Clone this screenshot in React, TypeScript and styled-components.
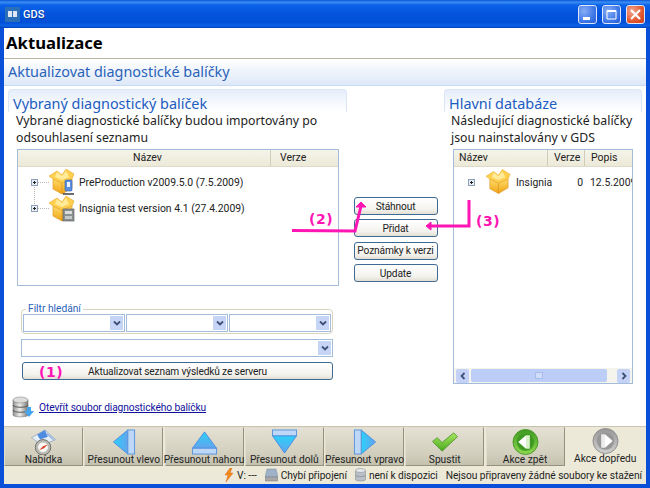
import React from "react"
import styled, { createGlobalStyle } from "styled-components"

const UI_FONT = `"Noto Sans", "DejaVu Sans", sans-serif`
const SMALL_FONT = `Roboto, "Noto Sans", sans-serif`
const PINK = "#ff14b4"

const Global = createGlobalStyle`
  html, body { margin: 0; padding: 0; background: #0054e3; }
  * { box-sizing: border-box; }
  body { font-family: ${UI_FONT}; font-size: 11px; color: #222; overflow: hidden; }
`

const Win = styled.div`
  position: relative;
  width: 650px;
  height: 488px;
  display: flex;
  flex-direction: column;
  background: #0a4fd8;
  padding: 0 4px 4px;
  overflow: hidden;
`

const TitleBar = styled.div`
  height: 28px;
  margin: 0 -4px;
  padding: 0 5px;
  display: flex;
  align-items: center;
  gap: 3px;
  background: linear-gradient(180deg, #0a57d8 0%, #3a8df2 8%, #0a62e8 18%, #0453dd 50%, #0250d8 80%, #0a62e6 92%, #0040b8 100%);
  color: #fff;
  font-family: ${SMALL_FONT};
  font-size: 11px;
  font-weight: 500;
`

const TitleText = styled.span`
  flex: 1;
  text-shadow: 1px 1px 0 #0b3a9a;
`

const WinButton = styled.div<{ $close?: boolean }>`
  width: 19px;
  height: 19px;
  border: 1px solid #dfe8fb;
  border-radius: 3px;
  margin-left: 2px;
  display: flex;
  align-items: center;
  justify-content: center;
  background: ${(p) =>
    p.$close
      ? "radial-gradient(circle at 30% 30%, #f2a88e, #e2572e 60%, #c83f18)"
      : "radial-gradient(circle at 30% 30%, #86adf5, #3a74e6 65%, #2a5ed6)"};
`

const Client = styled.div`
  position: relative;
  flex: 1;
  display: flex;
  flex-direction: column;
  background: #fff;
  min-height: 0;
`

const PageTitle = styled.h1`
  margin: 0;
  height: 31px;
  padding: 0 0 0 2px;
  font-size: 16.7px;
  line-height: 30px;
  font-weight: 700;
  color: #000;
  border-bottom: 1px solid #b9b6a8;
`

const SubTitle = styled.h2`
  margin: 0;
  height: 27px;
  padding: 0 0 2px 4px;
  display: flex;
  align-items: center;
  font-size: 14.4px;
  font-weight: 400;
  color: #2a62b8;
  background: linear-gradient(180deg, #fff 0%, #dde8f8 100%);
  border-bottom: 1px solid #c8d9f2;
`

const Body = styled.div`
  flex: 1;
  min-height: 0;
  display: grid;
  grid-template-columns: 339px 84px 198px;
  column-gap: 6.5px;
  padding: 3px 0 0 4px;
`

const Column = styled.section`
  display: flex;
  flex-direction: column;
  min-width: 0;
`

const PanelHead = styled.h3`
  margin: 0;
  height: 23px;
  padding: 4px 0 0 4px;
  font-size: 14.4px;
  line-height: 20px;
  font-weight: 400;
  color: #1d5cc0;
  border: 1px solid #dbe6f6;
  border-bottom: 0;
  border-radius: 4px 4px 0 0;
  background: linear-gradient(180deg, #e6eefb 0%, #fff 100%);
`

const PanelText = styled.p<{ $indent: number }>`
  margin: 0 0 3px;
  padding-left: ${(p) => p.$indent}px;
  font-size: 12.25px;
  line-height: 17px;
  color: #222;
`

const ListBox = styled.div<{ $h: number; $ml: number; $w: number }>`
  height: ${(p) => p.$h}px;
  width: ${(p) => p.$w}px;
  margin-left: ${(p) => p.$ml}px;
  border: 1px solid #a4bcdc;
  display: flex;
  flex-direction: column;
  background: #fff;
  overflow: hidden;
`

const ListHeader = styled.div<{ $cols: string }>`
  height: 17px;
  flex: none;
  display: grid;
  grid-template-columns: ${(p) => p.$cols};
  background: linear-gradient(180deg, #f5f4ea, #ece9d8);
  border-bottom: 1px solid #dedbc8;
  font-family: ${SMALL_FONT};
  font-size: 10.5px;
  line-height: 16px;
  color: #222;
`

const HeaderCell = styled.div<{ $pad: number }>`
  padding-left: ${(p) => p.$pad}px;
  border-right: 1px solid #cfccb8;
  white-space: nowrap;
  overflow: hidden;
  &:last-child { border-right: 0; }
`

const Rows = styled.div`
  flex: 1;
  min-height: 0;
  padding-top: 2px;
`

const TreeRow = styled.div<{ $pad: number }>`
  height: 26.5px;
  display: flex;
  align-items: center;
  padding-left: ${(p) => p.$pad}px;
  font-family: ${SMALL_FONT};
  font-size: 10.4px;
  white-space: nowrap;
  color: #222;
`

const Expander = styled.span`
  width: 7px;
  height: 7px;
  flex: none;
  border: 1px solid #8f9fb5;
  background: #e8eef8;
  position: relative;
  &::before {
    content: "";
    position: absolute;
    left: 1px; right: 1px; top: 2px;
    height: 1px;
    background: #222;
  }
  &::after {
    content: "";
    position: absolute;
    top: 1px; bottom: 1px; left: 2px;
    width: 1px;
    background: #222;
  }
`

const Stem = styled.span`
  position: absolute;
  left: 2px;
  top: 7px;
  height: 19px;
  border-left: 1px dotted #b8b8b8;
`

const Dash = styled.span`
  width: 11px;
  flex: none;
  border-top: 1px dotted #b8b8b8;
`

const Cell = styled.span<{ $w: number; $right?: boolean; $pad?: number }>`
  width: ${(p) => p.$w}px;
  flex: none;
  padding-left: ${(p) => p.$pad ?? 0}px;
  text-align: ${(p) => (p.$right ? "right" : "left")};
  overflow: hidden;
`

const HScroll = styled.div`
  height: 15px;
  flex: none;
  padding: 0 2px;
  display: flex;
  align-items: center;
  gap: 2px;
  background: #f4f3ec;
`

const ScrollButton = styled.div`
  width: 13px;
  height: 14px;
  border-radius: 2px;
  background: #c3d2f6;
  display: flex;
  align-items: center;
  justify-content: center;
`

const ScrollThumb = styled.div`
  flex: 1;
  height: 13px;
  margin-right: 8px;
  border-radius: 2px;
  background: #bccdf8;
  display: flex;
  align-items: center;
  justify-content: center;
  &::after {
    content: "";
    width: 6px;
    height: 5px;
    border: 1px solid #a9bdeb;
    background: #cfdcfa;
  }
`

const FilterGroup = styled.fieldset`
  margin: 18px 0 0 13px;
  width: 312px;
  height: 30px;
  padding: 0 1px;
  border: 1px solid #d8d4c0;
  border-radius: 4px;
  display: flex;
  gap: 1px;
`

const FilterLegend = styled.legend`
  margin-left: 3px;
  padding: 0 2px;
  font-family: ${SMALL_FONT};
  font-size: 10.2px;
  line-height: 10px;
  color: #2a62b8;
`

const ComboBox = styled.div<{ $wide?: boolean }>`
  height: 18px;
  border: 1px solid #a4bcdc;
  background: #fff;
  display: flex;
  justify-content: flex-end;
  align-items: center;
  padding-right: 1px;
  width: ${(p) => (p.$wide ? "312px" : "auto")};
  margin: ${(p) => (p.$wide ? "5px 0 0 13px" : "0")};
  flex: ${(p) => (p.$wide ? "none" : 1)};
`

const ComboArrow = styled.span`
  width: 13px;
  height: 14px;
  background: #c6d5f5;
  display: flex;
  align-items: center;
  justify-content: center;
`

const ActionButton = styled.button<{ $wide?: boolean }>`
  display: block;
  flex: none;
  height: 18px;
  width: ${(p) => (p.$wide ? "311px" : "84px")};
  margin: ${(p) => (p.$wide ? "5px 0 0 14px" : "0")};
  padding: 0;
  border: 1px solid #3f6a94;
  border-radius: 3px;
  background: linear-gradient(180deg, #fff 0%, #f4f3ee 70%, #e2dfd4 100%);
  font-family: ${SMALL_FONT};
  font-size: 10.2px;
  letter-spacing: -0.15px;
  line-height: 15px;
  color: #222;
  white-space: nowrap;
`

const ButtonStack = styled.div`
  display: flex;
  flex-direction: column;
  gap: 4.4px;
  padding-top: 108px;
`

const LinkRow = styled.div`
  display: flex;
  align-items: center;
  gap: 4px;
  margin: 15px 0 0 3px;
  font-family: ${SMALL_FONT};
  font-size: 10.2px;
  letter-spacing: -0.1px;
`

const LinkText = styled.a`
  color: #10109c;
  text-decoration: underline;
`

const Toolbar = styled.div`
  height: 40px;
  flex: none;
  display: flex;
  gap: 1.25px;
  background: #ece9d8;
  border-top: 1px solid #c9c5b2;
`

const ToolButton = styled.div<{ $flat?: boolean }>`
  position: relative;
  width: 79px;
  flex: none;
  display: flex;
  flex-direction: column;
  align-items: center;
  padding-top: 1px;
  font-family: ${SMALL_FONT};
  font-size: 10.2px;
  line-height: 12px;
  white-space: nowrap;
  color: #222;
  border: ${(p) => (p.$flat ? "0" : "1px solid #94917f")};
  border-top-color: #e0ddcf;
  border-left-color: #e0ddcf;
  background: ${(p) =>
    p.$flat ? "#ece9d8" : "linear-gradient(180deg, #e4e1d4 0%, #d2cfbe 70%, #c4c1af 100%)"};
  & > svg { flex: none; height: 26px; margin-bottom: -1px; }
`

const StatusBar = styled.div`
  height: 18px;
  flex: none;
  display: flex;
  justify-content: flex-end;
  align-items: center;
  gap: 8px;
  padding-right: 4px;
  background: #ece9d8;
  font-family: ${SMALL_FONT};
  font-size: 10.2px;
  letter-spacing: -0.05px;
  white-space: nowrap;
  color: #222;
`

const StatusItem = styled.span`
  display: inline-flex;
  align-items: center;
  gap: 3px;
`

const Overlay = styled.svg`
  position: absolute;
  left: 0;
  top: 0;
  pointer-events: none;
`

const Mark = styled.span<{ $x: number; $y: number }>`
  position: absolute;
  left: ${(p) => p.$x}px;
  top: ${(p) => p.$y}px;
  font-family: "DejaVu Sans", sans-serif;
  font-size: 14px;
  line-height: 16px;
  font-weight: 700;
  letter-spacing: 0.5px;
  color: ${PINK};
`

const Chevron = ({ dir = "down" }: { dir?: "down" | "left" | "right" }) => {
  const d =
    dir === "down" ? "M1 2.5 4 5.5 7 2.5" : dir === "left" ? "M5.5 1 2.5 4 5.5 7" : "M2.5 1 5.5 4 2.5 7"
  return (
    <svg width="8" height="8" viewBox="0 0 8 8">
      <path d={d} fill="none" stroke="#3d5078" strokeWidth="1.8" />
    </svg>
  )
}

const BoxIcon = ({ id, badge }: { id: string; badge?: "phone" | "box" }) => (
  <svg width="26" height="26" viewBox="0 0 26 26">
    <defs>
      <linearGradient id={id} x1="0" y1="0" x2="0" y2="1">
        <stop offset="0" stopColor="#ffdc6a" />
        <stop offset="1" stopColor="#f0a214" />
      </linearGradient>
    </defs>
    <path d="M4 10 13 14 23 10V19L13 25 4 20Z" fill={`url(#${id})`} stroke="#d8901a" strokeWidth=".6" />
    <path d="M13 14V25" stroke="#d8901a" strokeWidth=".6" />
    <path d="M0 7 8 2 13 6 17 0 25 5 23 10 13 14 4 10Z" fill="#ffd050" stroke="#e8a82a" strokeWidth=".6" />
    <path d="M8 3 13 7 17 2 20 8 13 11 6 8Z" fill="#ffeb9a" />
    {badge === "phone" && (
      <>
        <rect x="16" y="11" width="7" height="11" rx="1" fill="#5a8fe0" stroke="#2f5fae" strokeWidth=".6" />
        <rect x="18" y="13" width="3" height="5" fill="#eaf3ff" />
        <path d="M14 25H25" stroke="#333" strokeWidth="1.4" />
      </>
    )}
    {badge === "box" && (
      <>
        <rect x="14" y="13" width="11" height="12" fill="#8a8f90" stroke="#55595a" strokeWidth=".6" />
        <rect x="16" y="15" width="7" height="3" fill="#d8dcdc" />
        <rect x="16" y="20" width="7" height="3" fill="#c4c8c8" />
      </>
    )}
  </svg>
)

const DbIcon = () => (
  <svg width="24" height="24" viewBox="0 0 24 24">
    <defs>
      <linearGradient id="dbg" x1="0" y1="0" x2="1" y2="0">
        <stop offset="0" stopColor="#8f9190" />
        <stop offset=".45" stopColor="#eeeeec" />
        <stop offset="1" stopColor="#777" />
      </linearGradient>
    </defs>
    <path d="M2 5V20C2 22.5 17 22.5 17 20V5Z" fill="url(#dbg)" stroke="#666" strokeWidth=".5" />
    <ellipse cx="9.5" cy="5" rx="7.5" ry="3" fill="#dcdcda" stroke="#777" strokeWidth=".5" />
    <path d="M2 10C2 13 17 13 17 10M2 15C2 18 17 18 17 15" fill="none" stroke="#555" />
    <path d="M16 12H20V16H23L18 22 13 16H16Z" fill="#45a4ee" />
  </svg>
)

const ArrowGrad = ({ id, vertical }: { id: string; vertical?: boolean }) => (
  <linearGradient id={id} x1="0" y1="0" x2={vertical ? "0" : "1"} y2={vertical ? "1" : "0"}>
    <stop offset="0" stopColor="#2cd0fa" />
    <stop offset="1" stopColor="#62a4ee" />
  </linearGradient>
)

const LeftIcon = () => (
  <svg width="24" height="27" viewBox="0 0 24 27">
    <defs><ArrowGrad id="al" /></defs>
    <path d="M1 13.5 16 1V26Z" fill="url(#al)" stroke="#4a8ee0" />
    <rect x="16" y="1" width="7" height="25" fill="#bcd8f6" stroke="#5b94dc" />
  </svg>
)

const RightIcon = () => (
  <svg width="24" height="27" viewBox="0 0 24 27">
    <defs><ArrowGrad id="ar" /></defs>
    <path d="M23 13.5 8 1V26Z" fill="url(#ar)" stroke="#4a8ee0" />
    <rect x="1" y="1" width="7" height="25" fill="#bcd8f6" stroke="#5b94dc" />
  </svg>
)

const UpIcon = () => (
  <svg width="27" height="27" viewBox="0 0 27 27">
    <defs><ArrowGrad id="au" vertical /></defs>
    <path d="M13.5 3 26 20H1Z" fill="url(#au)" stroke="#4a8ee0" />
    <rect x="1" y="20" width="25" height="6" fill="#bcd8f6" stroke="#5b94dc" />
  </svg>
)

const DownIcon = () => (
  <svg width="27" height="27" viewBox="0 0 27 27">
    <defs><ArrowGrad id="ad" vertical /></defs>
    <path d="M13.5 25 26 7H1Z" fill="url(#ad)" stroke="#4a8ee0" />
    <rect x="1" y="1" width="25" height="6" fill="#bcd8f6" stroke="#5b94dc" />
  </svg>
)

const CheckIcon = () => (
  <svg width="28" height="27" viewBox="0 0 28 27">
    <defs>
      <linearGradient id="chk" x1="0" y1="0" x2="0" y2="1">
        <stop offset="0" stopColor="#a8e860" />
        <stop offset="1" stopColor="#4aa820" />
      </linearGradient>
    </defs>
    <path d="M1 13 6 9 11 14 23 4 27 8 11 23Z" fill="url(#chk)" stroke="#4a8e28" strokeWidth=".8" />
  </svg>
)

const RoundIcon = ({
  id,
  light,
  dark,
  ring,
  children,
}: {
  id: string
  light: string
  dark: string
  ring: string
  children: React.ReactNode
}) => (
  <svg width="27" height="27" viewBox="0 0 27 27">
    <defs>
      <linearGradient id={id} x1="0" y1="0" x2="0" y2="1">
        <stop offset="0" stopColor={dark} />
        <stop offset="1" stopColor={light} />
      </linearGradient>
    </defs>
    <circle cx="13.5" cy="13.5" r="13" fill={`url(#${id})`} stroke={ring} />
    <circle cx="13.5" cy="13.5" r="9" fill={dark} />
    {children}
  </svg>
)

const BackIcon = () => (
  <RoundIcon id="rb" light="#8ed850" dark="#3e9a20" ring="#4d9a2a">
    <path d="M6 13.5 14 6.5V20.5Z" fill="#fff" />
    <rect x="14" y="6.5" width="4" height="14" fill="#d8f2c8" />
  </RoundIcon>
)

const ForwardIcon = () => (
  <RoundIcon id="rf" light="#d0d0d0" dark="#979797" ring="#8e8e8e">
    <path d="M21 13.5 13 6.5V20.5Z" fill="#fff" />
    <rect x="9" y="6.5" width="4" height="14" fill="#ececec" />
  </RoundIcon>
)

const CompassIcon = () => (
  <svg width="27" height="27" viewBox="0 0 27 27">
    <path d="M1 9 15 1 26 11 12 17Z" fill="#e6eef8" stroke="#7a8ea8" strokeWidth=".6" />
    <path d="M7 6 15 1 18 8 10 11Z" fill="#4f8ce0" />
    <path d="M17 5 24 11" stroke="#8fb2de" strokeWidth="1.5" />
    <circle cx="13" cy="19" r="8" fill="#bdbdb8" stroke="#6a6a66" />
    <circle cx="13" cy="19" r="5.5" fill="#f8f8f4" stroke="#9a9a96" strokeWidth=".5" />
    <path d="M9 22 13 18 18 16 14 20Z" fill="#e04028" />
  </svg>
)

const BoltIcon = () => (
  <svg width="10" height="14" viewBox="0 0 10 14">
    <path d="M6 0 1 7H4L2 14 9 5H6L8 0Z" fill="#f08a18" stroke="#d8561a" strokeWidth=".4" />
  </svg>
)

const DriveIcon = () => (
  <svg width="13" height="14" viewBox="0 0 13 14">
    <path d="M2 1H11L13 9H0Z" fill="#9fb2c8" stroke="#7a8ca0" strokeWidth=".5" />
    <rect x="0.5" y="9" width="12" height="4" fill="#a8a8a8" stroke="#777" strokeWidth=".5" />
  </svg>
)

const CylinderIcon = () => (
  <svg width="11" height="14" viewBox="0 0 11 14">
    <path d="M.5 2.5V11.5C.5 13.5 10.5 13.5 10.5 11.5V2.5Z" fill="#b9bfc6" stroke="#7c828a" strokeWidth=".5" />
    <ellipse cx="5.5" cy="2.5" rx="5" ry="2" fill="#e4e7ea" stroke="#7c828a" strokeWidth=".5" />
    <path d="M.5 7C.5 9 10.5 9 10.5 7" fill="none" stroke="#7c828a" strokeWidth=".6" />
  </svg>
)

const tools = [
  { label: "Nabídka", icon: <CompassIcon /> },
  { label: "Přesunout vlevo", icon: <LeftIcon /> },
  { label: "Přesunout nahoru", icon: <UpIcon /> },
  { label: "Přesunout dolů", icon: <DownIcon /> },
  { label: "Přesunout vpravo", icon: <RightIcon /> },
  { label: "Spustit", icon: <CheckIcon /> },
  { label: "Akce zpět", icon: <BackIcon /> },
  { label: "Akce dopředu", icon: <ForwardIcon />, flat: true },
]

const App: React.FC = () => (
  <Win>
    <Global />
    <TitleBar>
      <svg width="15" height="15" viewBox="0 0 15 15">
        <rect width="15" height="15" fill="#2a6fb8" />
        <rect x="3" y="4" width="9" height="6" fill="#dfe8f4" />
        <path d="M7.5 4V10" stroke="#2a6fb8" />
      </svg>
      <TitleText>GDS</TitleText>
      <WinButton>
        <svg width="11" height="11" viewBox="0 0 11 11"><rect x="1" y="8" width="7" height="3" fill="#fff" /></svg>
      </WinButton>
      <WinButton>
        <svg width="11" height="11" viewBox="0 0 11 11"><path d="M1 1.5H10V10H1Z" fill="none" stroke="#fff" /><rect x="1" y="1" width="9" height="2" fill="#fff" /></svg>
      </WinButton>
      <WinButton $close>
        <svg width="11" height="11" viewBox="0 0 11 11"><path d="M1 1 10 10M10 1 1 10" stroke="#fff" strokeWidth="2.2" /></svg>
      </WinButton>
    </TitleBar>
    <Client>
      <PageTitle>Aktualizace</PageTitle>
      <SubTitle>Aktualizovat diagnostické balíčky</SubTitle>
      <Body>
        <Column>
          <PanelHead>Vybraný diagnostický balíček</PanelHead>
          <PanelText $indent={8}>
            Vybrané diagnostické balíčky budou importovány po
            <br />
            odsouhlasení seznamu
          </PanelText>
          <ListBox $h={137} $w={322} $ml={9}>
            <ListHeader $cols="253px 1fr">
              <HeaderCell $pad={115}>Název</HeaderCell>
              <HeaderCell $pad={9}>Verze</HeaderCell>
            </ListHeader>
            <Rows>
              <TreeRow $pad={13}>
                <Expander><Stem /></Expander>
                <Dash />
                <BoxIcon id="b1" badge="phone" />
                <Cell $w={220} $pad={4}>PreProduction v2009.5.0 (7.5.2009)</Cell>
              </TreeRow>
              <TreeRow $pad={13}>
                <Expander />
                <Dash />
                <BoxIcon id="b2" badge="box" />
                <Cell $w={220} $pad={4}>Insignia test version 4.1 (27.4.2009)</Cell>
              </TreeRow>
            </Rows>
          </ListBox>
          <FilterGroup>
            <FilterLegend>Filtr hledání</FilterLegend>
            <ComboBox><ComboArrow><Chevron /></ComboArrow></ComboBox>
            <ComboBox><ComboArrow><Chevron /></ComboArrow></ComboBox>
            <ComboBox><ComboArrow><Chevron /></ComboArrow></ComboBox>
          </FilterGroup>
          <ComboBox $wide><ComboArrow><Chevron /></ComboArrow></ComboBox>
          <ActionButton $wide>Aktualizovat seznam výsledků ze serveru</ActionButton>
          <LinkRow>
            <DbIcon />
            <LinkText>Otevřít soubor diagnostického balíčku</LinkText>
          </LinkRow>
        </Column>
        <ButtonStack>
          <ActionButton>Stáhnout</ActionButton>
          <ActionButton>Přidat</ActionButton>
          <ActionButton>Poznámky k verzi</ActionButton>
          <ActionButton>Update</ActionButton>
        </ButtonStack>
        <Column>
          <PanelHead>Hlavní databáze</PanelHead>
          <PanelText $indent={7}>
            Následující diagnostické balíčky
            <br />
            jsou nainstalovány v GDS
          </PanelText>
          <ListBox $h={235} $w={180} $ml={9}>
            <ListHeader $cols="94px 37px 1fr">
              <HeaderCell $pad={5}>Název</HeaderCell>
              <HeaderCell $pad={6}>Verze</HeaderCell>
              <HeaderCell $pad={6}>Popis</HeaderCell>
            </ListHeader>
            <Rows>
              <TreeRow $pad={14}>
                <Expander />
                <Cell $w={11} />
                <BoxIcon id="b3" />
                <Cell $w={66} $pad={5}>Insignia</Cell>
                <Cell $w={6} $right>0</Cell>
                <Cell $w={49} $pad={7}>12.5.2009</Cell>
              </TreeRow>
            </Rows>
            <HScroll>
              <ScrollButton><Chevron dir="left" /></ScrollButton>
              <ScrollThumb />
              <ScrollButton><Chevron dir="right" /></ScrollButton>
            </HScroll>
          </ListBox>
        </Column>
      </Body>
      <Toolbar>
        {tools.map((t) => (
          <ToolButton key={t.label} $flat={t.flat}>
            {t.icon}
            {t.label}
          </ToolButton>
        ))}
      </Toolbar>
      <StatusBar>
        <StatusItem><BoltIcon />V: ---</StatusItem>
        <StatusItem><DriveIcon />Chybí připojení</StatusItem>
        <StatusItem><CylinderIcon />není k dispozici</StatusItem>
        <StatusItem>Nejsou připraveny žádné soubory ke stažení</StatusItem>
      </StatusBar>
    </Client>
    <Overlay width="650" height="488" viewBox="0 0 650 488">
      <path d="M292 230.5 355 231 361 206" fill="none" stroke={PINK} strokeWidth="3" />
      <path d="M361 202 366 207H356Z" fill={PINK} stroke={PINK} strokeLinejoin="round" />
      <path d="M469 200V226H430" fill="none" stroke={PINK} strokeWidth="3" />
      <path d="M426 226 431 222V230Z" fill={PINK} stroke={PINK} strokeLinejoin="round" />
    </Overlay>
    <Mark $x={39} $y={364}>(1)</Mark>
    <Mark $x={309} $y={211}>(2)</Mark>
    <Mark $x={476} $y={213}>(3)</Mark>
  </Win>
)

export default App
